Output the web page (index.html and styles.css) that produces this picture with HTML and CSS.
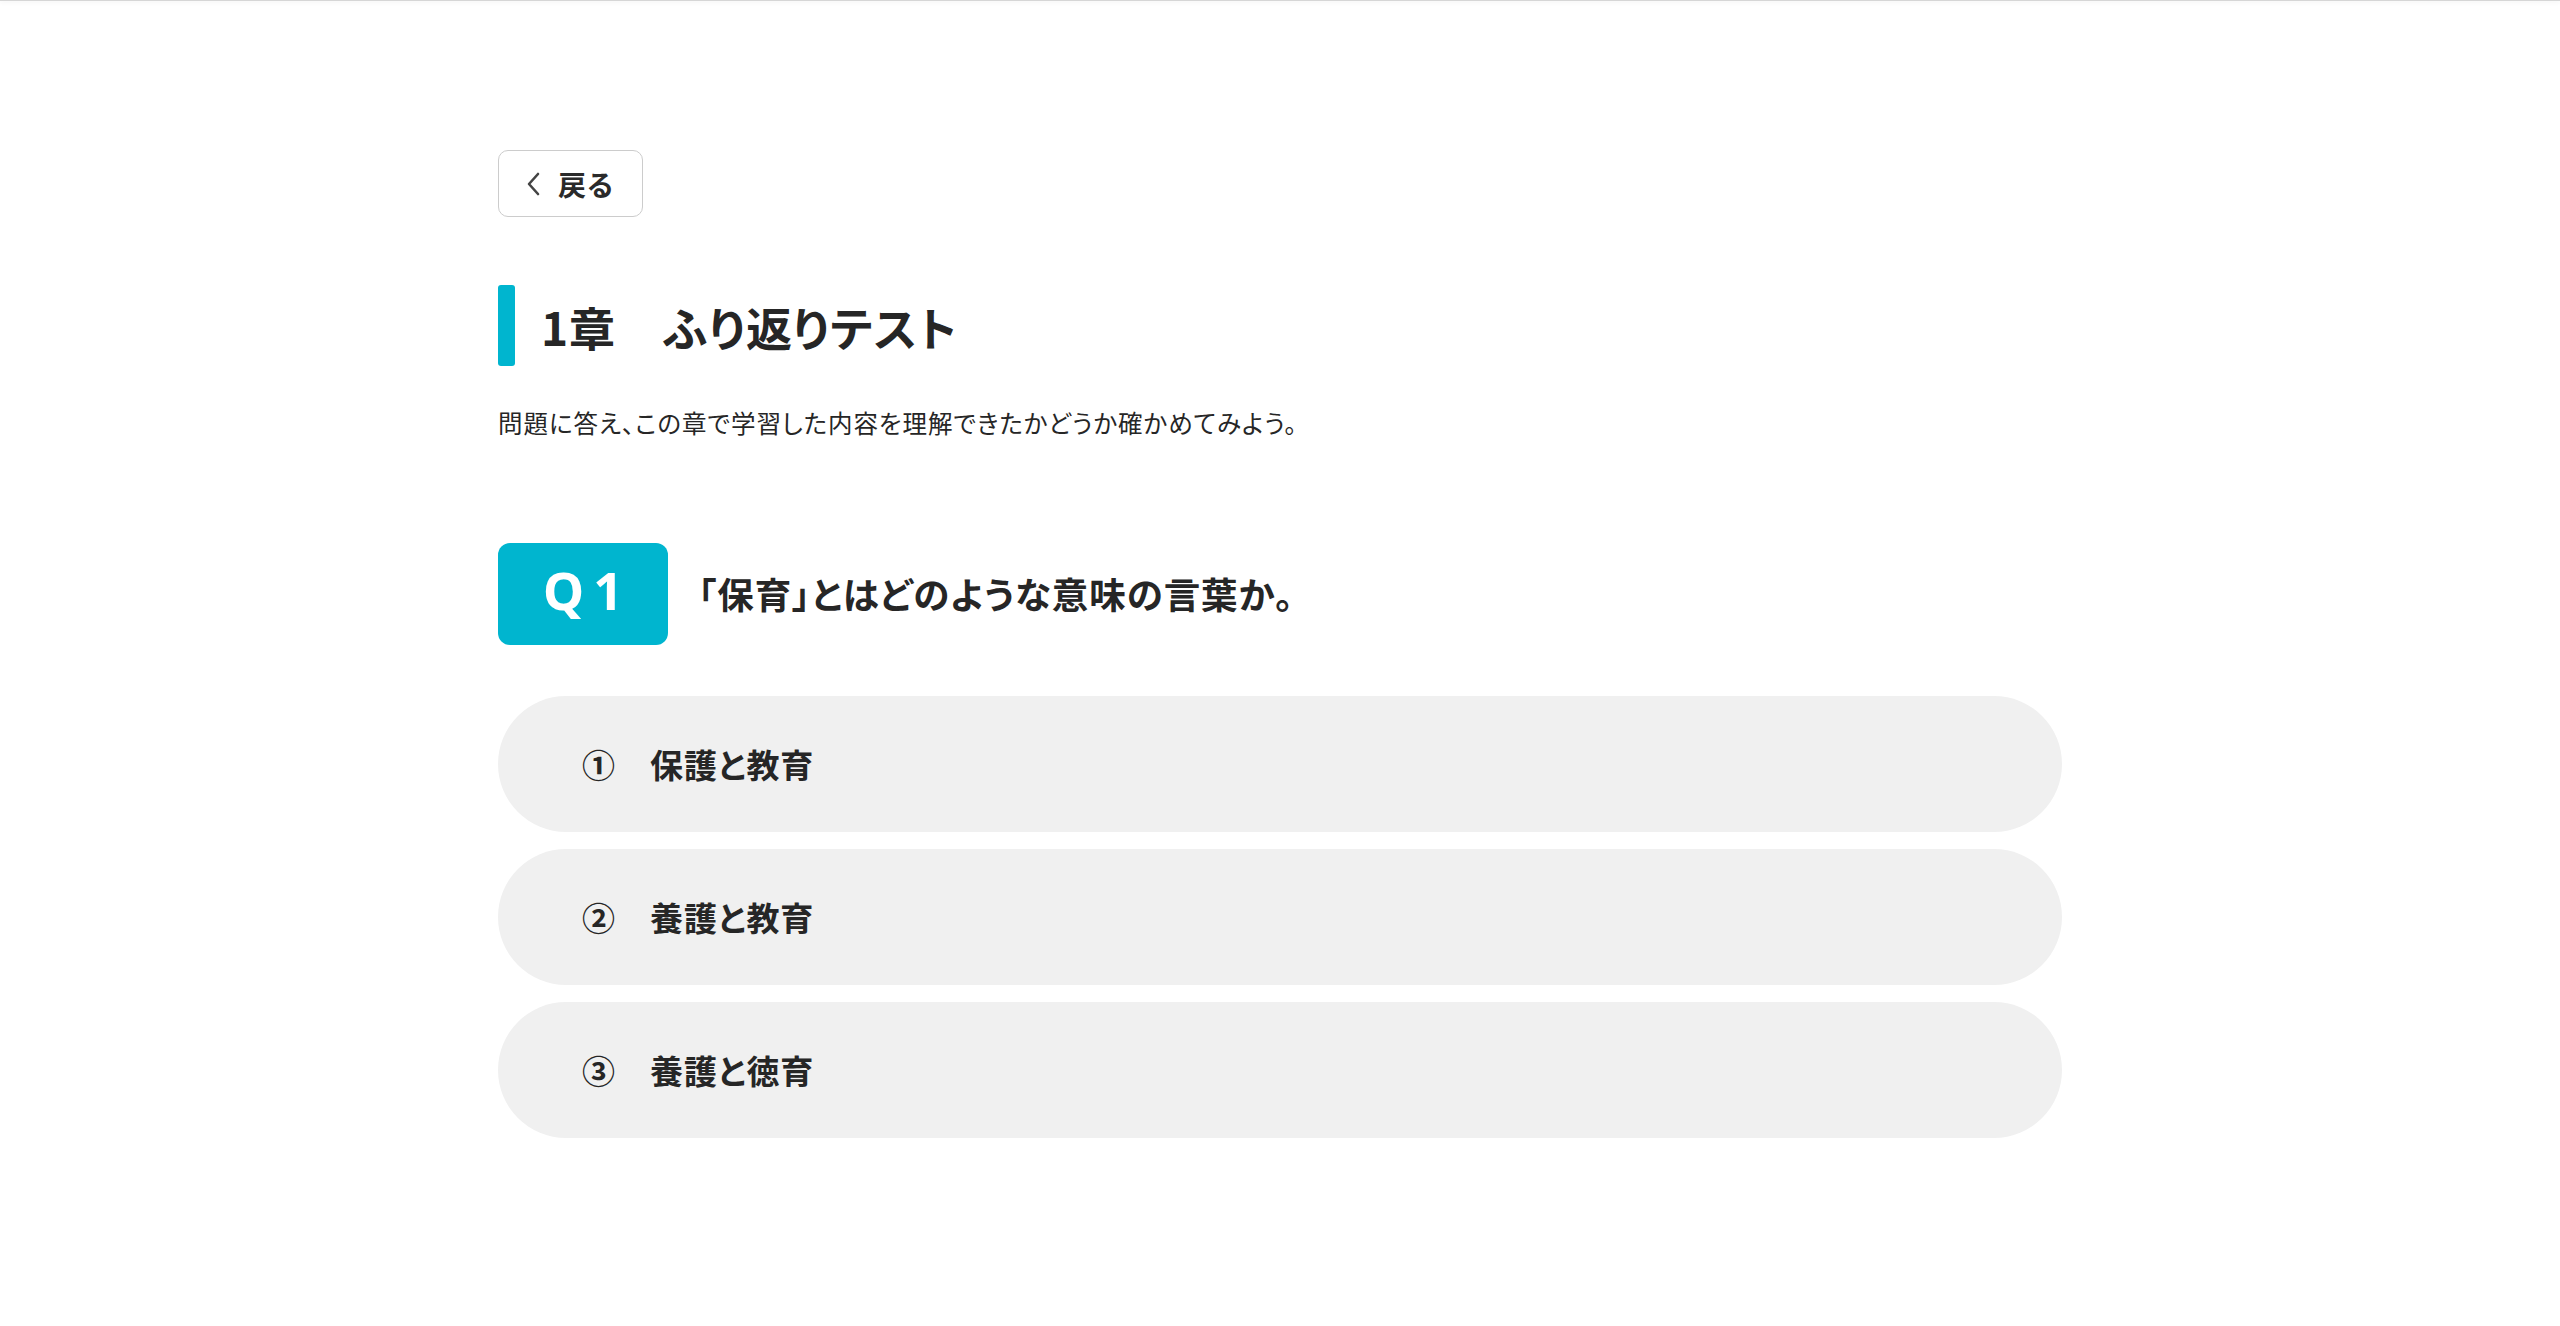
FILE: index.html
```html
<!DOCTYPE html>
<html lang="ja">
<head>
<meta charset="utf-8">
<title>1章 ふり返りテスト</title>
<link rel="stylesheet" href="styles.css">
</head>
<body>
<div class="topline"></div>
<main class="container">
  <a class="back-btn" href="#">
    <svg class="chev" width="17" height="24" viewBox="0 0 17 24"><path d="M13 2 L4 12 L13 22" fill="none" stroke="#444" stroke-width="2.6" stroke-linecap="round" stroke-linejoin="round"/></svg>
    <span class="back-label">戻る</span>
  </a>

  <h1 class="chapter-title">1章　ふり返りテスト</h1>
  <p class="lead">問題に答え、この章で学習した内容を理解できたかどうか確かめてみよう。</p>

  <section class="question">
    <div class="q-head">
      <div class="q-badge"><span>Q</span><span>1</span></div>
      <h2 class="q-text">「保育」とはどのような意味の言葉か。</h2>
    </div>
    <ul class="choices">
      <li class="choice"><span class="num">①</span><span class="label">保護と教育</span></li>
      <li class="choice"><span class="num">②</span><span class="label">養護と教育</span></li>
      <li class="choice"><span class="num">③</span><span class="label">養護と徳育</span></li>
    </ul>
  </section>
</main>
</body>
</html>
```

FILE: styles.css
```css
* { box-sizing: border-box; }

html, body {
  margin: 0;
  padding: 0;
  background: #ffffff;
}

body {
  font-family: "Noto Sans CJK JP", "Noto Sans", sans-serif;
  color: #262626;
  font-feature-settings: "palt";
  letter-spacing: 0.06em;
}

.topline {
  height: 1px;
  background: #d6d6d6;
  box-shadow: 0 1px 4px rgba(0, 0, 0, 0.12);
}

.container {
  width: 1564px;
  margin: 0 auto;
  padding-top: 149px;
}

.back-btn {
  display: inline-flex;
  align-items: center;
  width: 145px;
  height: 67px;
  padding-left: 26px;
  border: 1px solid #cccccc;
  border-radius: 10px;
  background: #fff;
  text-decoration: none;
  color: #2a2a2a;
}

.chev { display: block; margin-right: 16px; }

.back-label {
  font-size: 28px;
  font-weight: 700;
  line-height: 1;
}

.chapter-title {
  display: flex;
  align-items: center;
  margin: 68px 0 0;
  min-height: 81px;
  font-size: 46px;
  font-weight: 700;
  line-height: 1;
  color: #262626;
}

.chapter-title::before {
  content: "";
  flex: 0 0 17px;
  height: 81px;
  margin-right: 26px;
  background: #00b5cf;
  border-radius: 3px;
}

.lead {
  margin: 39px 0 0;
  font-size: 24.5px;
  line-height: 36px;
  color: #262626;
}

.question { margin-top: 102px; }

.q-head {
  display: flex;
  align-items: center;
}

.q-badge {
  display: flex;
  align-items: center;
  justify-content: center;
  gap: 9px;
  width: 170px;
  height: 102px;
  border-radius: 12px;
  background: #00b5cf;
  color: #fff;
  font-family: "Noto Sans", "Noto Sans CJK JP", sans-serif;
  font-size: 52px;
  font-weight: 700;
  line-height: 1;
  letter-spacing: 0;
  padding-bottom: 8px;
}

.q-text {
  margin: 0 0 0 30px;
  font-size: 36.5px;
  font-weight: 700;
  line-height: 1;
  color: #262626;
}

.choices {
  list-style: none;
  margin: 51px 0 0;
  padding: 0;
  display: flex;
  flex-direction: column;
  gap: 17px;
}

.choice {
  display: flex;
  align-items: center;
  height: 136px;
  padding-left: 84px;
  border-radius: 68px;
  background: #f0f0f0;
  font-size: 33px;
  font-weight: 700;
  line-height: 1;
  color: #262626;
}

.num {
  display: inline-block;
  width: 33px;
  margin-right: 35px;
  font-weight: 700;
}
```
